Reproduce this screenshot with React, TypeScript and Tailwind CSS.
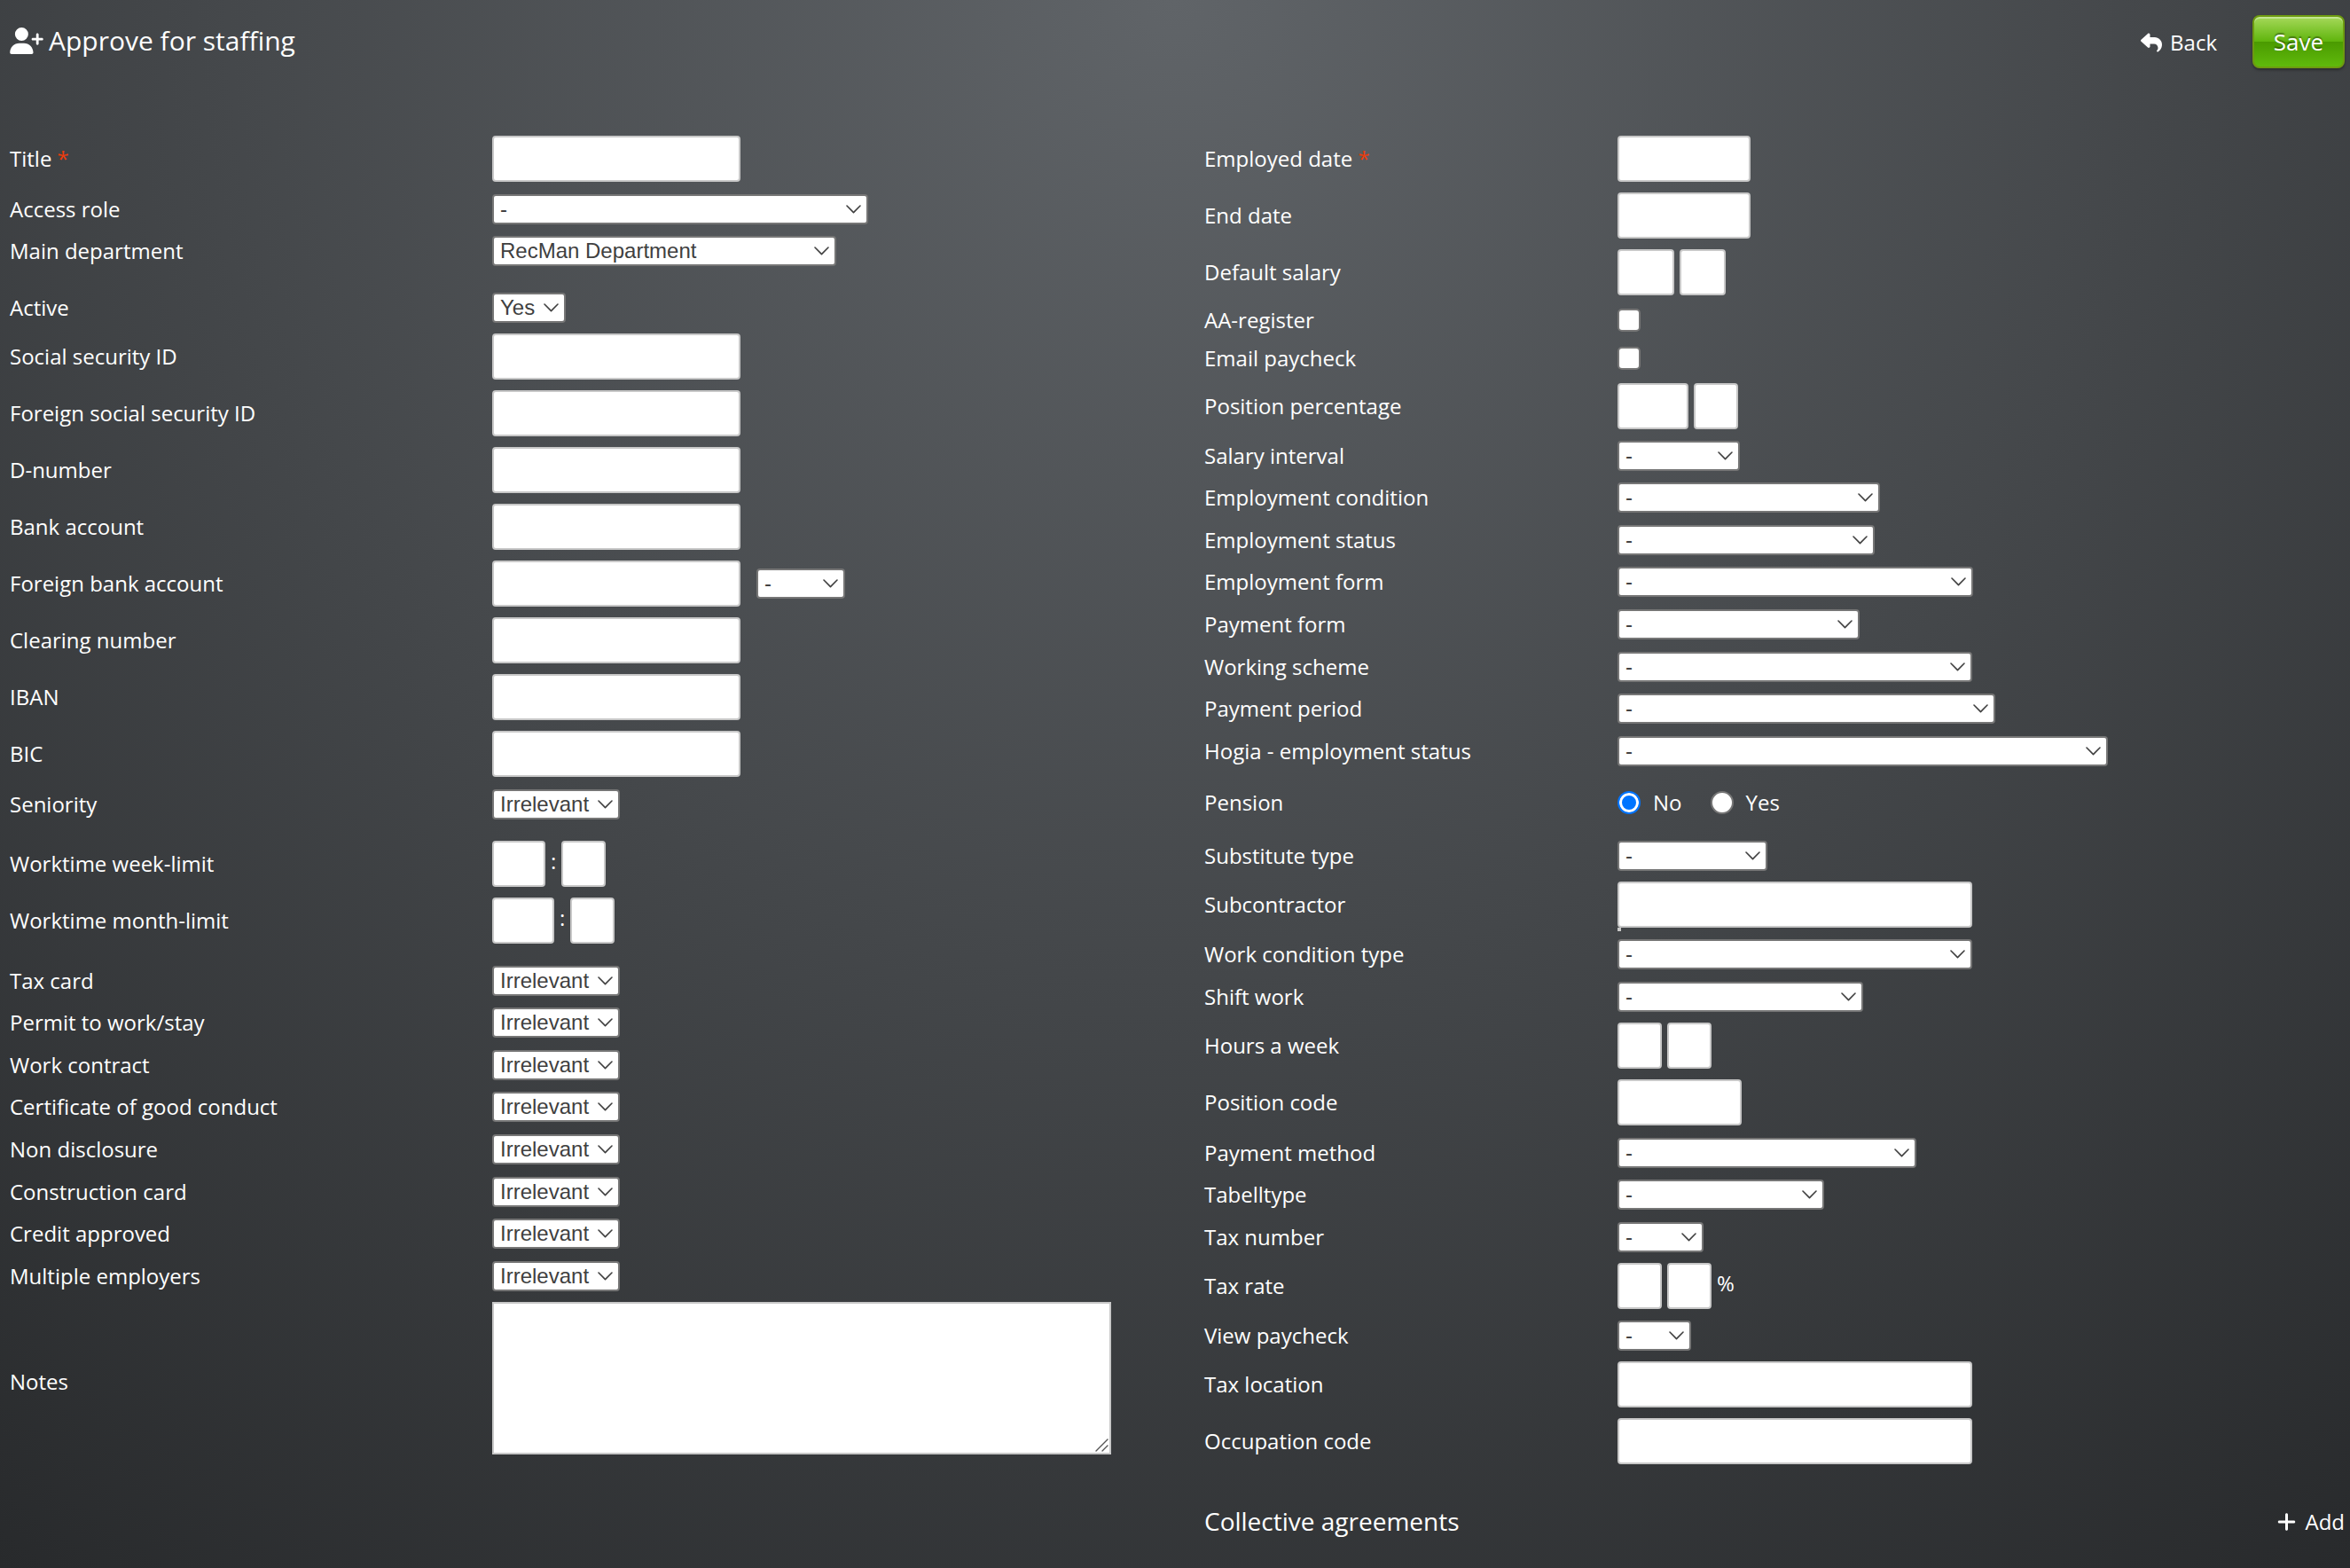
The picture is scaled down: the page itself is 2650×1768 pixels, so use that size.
import React from "react";
// Icons
import { FaPlus, FaReply, FaUserPlus } from "react-icons/fa6";

type Control =
  | { type: "input"; width: string; before?: string }
  | { type: "select"; width: string; value?: string; indent?: string }
  | { type: "checkbox" }
  | { type: "radio" }
  | { type: "textarea" }
  | { type: "text"; value: string };

type Field = {
  label: string;
  gap?: string;
  required?: boolean;
  suggestions?: boolean;
  controls: Control[];
};

const input = (width: string): Control => ({ type: "input", width });
const select = (width: string, value = "-"): Control => ({
  type: "select",
  width,
  value,
});
const irrelevant = select("w-[144px]", "Irrelevant");

const leftFields: Field[] = [
  { label: "Title", gap: "mt-0", required: true, controls: [input("w-[280px]")] },
  { label: "Access role", gap: "mt-[14px]", controls: [select("w-[424px]")] },
  {
    label: "Main department",
    gap: "mt-[13px]",
    controls: [select("w-[388px]", "RecMan Department")],
  },
  { label: "Active", gap: "mt-[30px]", controls: [select("w-[83px]", "Yes")] },
  { label: "Social security ID", controls: [input("w-[280px]")] },
  { label: "Foreign social security ID", controls: [input("w-[280px]")] },
  { label: "D-number", controls: [input("w-[280px]")] },
  { label: "Bank account", controls: [input("w-[280px]")] },
  {
    label: "Foreign bank account",
    controls: [
      input("w-[280px]"),
      { type: "select", width: "w-[100px]", value: "-", indent: "ml-3" },
    ],
  },
  { label: "Clearing number", controls: [input("w-[280px]")] },
  { label: "IBAN", controls: [input("w-[280px]")] },
  { label: "BIC", controls: [input("w-[280px]")] },
  { label: "Seniority", gap: "mt-[14px]", controls: [irrelevant] },
  {
    label: "Worktime week-limit",
    gap: "mt-6",
    controls: [input("w-[60px]"), { type: "text", value: ":" }, input("w-[50px]")],
  },
  {
    label: "Worktime month-limit",
    controls: [input("w-[70px]"), { type: "text", value: ":" }, input("w-[50px]")],
  },
  { label: "Tax card", gap: "mt-[25px]", controls: [irrelevant] },
  { label: "Permit to work/stay", gap: "mt-[13px]", controls: [irrelevant] },
  { label: "Work contract", gap: "mt-[14px]", controls: [irrelevant] },
  { label: "Certificate of good conduct", gap: "mt-[13px]", controls: [irrelevant] },
  { label: "Non disclosure", gap: "mt-[14px]", controls: [irrelevant] },
  { label: "Construction card", gap: "mt-[14px]", controls: [irrelevant] },
  { label: "Credit approved", gap: "mt-[13px]", controls: [irrelevant] },
  { label: "Multiple employers", gap: "mt-[14px]", controls: [irrelevant] },
  { label: "Notes", controls: [{ type: "textarea" }] },
];

const rightFields: Field[] = [
  { label: "Employed date", gap: "mt-0", required: true, controls: [input("w-[150px]")] },
  { label: "End date", controls: [input("w-[150px]")] },
  { label: "Default salary", controls: [input("w-[64px]"), input("w-[52px]")] },
  { label: "AA-register", controls: [{ type: "checkbox" }] },
  { label: "Email paycheck", gap: "mt-[11px]", controls: [{ type: "checkbox" }] },
  { label: "Position percentage", controls: [input("w-[80px]"), input("w-[50px]")] },
  { label: "Salary interval", gap: "mt-[13px]", controls: [select("w-[138px]")] },
  { label: "Employment condition", gap: "mt-[13px]", controls: [select("w-[296px]")] },
  { label: "Employment status", gap: "mt-[14px]", controls: [select("w-[290px]")] },
  { label: "Employment form", gap: "mt-[13px]", controls: [select("w-[401px]")] },
  { label: "Payment form", gap: "mt-[14px]", controls: [select("w-[273px]")] },
  { label: "Working scheme", gap: "mt-[14px]", controls: [select("w-[400px]")] },
  { label: "Payment period", gap: "mt-[13px]", controls: [select("w-[426px]")] },
  {
    label: "Hogia - employment status",
    gap: "mt-[14px]",
    controls: [select("w-[553px]")],
  },
  { label: "Pension", gap: "mt-[25px]", controls: [{ type: "radio" }] },
  { label: "Substitute type", gap: "mt-[27px]", controls: [select("w-[169px]")] },
  { label: "Subcontractor", suggestions: true, controls: [input("w-[400px]")] },
  { label: "Work condition type", gap: "mt-[13px]", controls: [select("w-[400px]")] },
  { label: "Shift work", gap: "mt-[14px]", controls: [select("w-[277px]")] },
  { label: "Hours a week", controls: [input("w-[50px]"), input("w-[50px]")] },
  { label: "Position code", controls: [input("w-[140px]")] },
  { label: "Payment method", gap: "mt-[14px]", controls: [select("w-[337px]")] },
  { label: "Tabelltype", gap: "mt-[13px]", controls: [select("w-[233px]")] },
  { label: "Tax number", gap: "mt-[14px]", controls: [select("w-[97px]")] },
  {
    label: "Tax rate",
    controls: [input("w-[50px]"), input("w-[50px]"), { type: "text", value: "%" }],
  },
  { label: "View paycheck", gap: "mt-[13px]", controls: [select("w-[83px]")] },
  { label: "Tax location", controls: [input("w-[400px]")] },
  { label: "Occupation code", controls: [input("w-[400px]")] },
];

function Select({ id, name, control }: { id: string; name: string; control: any }) {
  return (
    <div className={`relative ${control.width} ${control.indent ?? ""}`}>
      <select
        id={id}
        aria-label={name}
        className="block w-full h-[34px] pl-[7px] pr-7 appearance-none rounded-[4px] border-2 border-[#767676] bg-white text-[#404040] text-2xl leading-[30px] font-['Liberation_Sans',Arial,sans-serif]"
      >
        <option>{control.value}</option>
      </select>
      <svg
        className="absolute right-2 top-3 w-[17px] h-[10px] pointer-events-none"
        viewBox="0 0 17 10"
        fill="none"
        stroke="#404040"
        strokeWidth="1.6"
        strokeLinecap="round"
        strokeLinejoin="round"
      >
        <path d="M1 1 L8.5 8.6 L16 1" />
      </svg>
    </div>
  );
}

function PensionRadios({ id }: { id: string }) {
  const [pension, setPension] = React.useState("No");

  return (
    <div className="flex items-center h-8 gap-8">
      {["No", "Yes"].map((option) => (
        <label key={option} className="flex items-center gap-[14px]">
          <input
            id={option === "No" ? id : undefined}
            type="radio"
            name="pension"
            checked={pension === option}
            onChange={() => setPension(option)}
            className="appearance-none size-[26px] rounded-full border-2 border-[#767676] bg-white checked:border-[#0075ff] checked:bg-[#0075ff] checked:shadow-[inset_0_0_0_3px_#fff]"
          />
          {option}
        </label>
      ))}
    </div>
  );
}

function Notes({ id }: { id: string }) {
  return (
    <div className="relative">
      <textarea
        id={id}
        className="block w-[698px] h-[172px] p-2 border-2 border-[#c8c8c8] bg-white text-[#404040]"
      />
      {/* Resize grip */}
      <svg
        className="absolute right-[2px] bottom-[2px] size-4 bg-white pointer-events-none"
        viewBox="0 0 16 16"
        stroke="#555"
        strokeWidth="1.4"
        strokeLinecap="round"
      >
        <path d="M1 14 L14 1 M8 14 L14 8" />
      </svg>
    </div>
  );
}

function FieldRow({ field, labelWidth }: { field: Field; labelWidth: string }) {
  const id = field.label.toLowerCase().replace(/[^a-z]+/g, "-");
  const isNotes = field.controls[0].type === "textarea";

  return (
    <div className={`flex items-center ${field.gap ?? "mt-3"}`}>
      <label
        htmlFor={`${id}-0`}
        className={`${labelWidth} shrink-0 ${isNotes ? "pt-2" : ""}`}
      >
        {field.label}
        {field.required && <span className="text-[#ee3c0c]"> *</span>}
      </label>

      {/* Controls */}
      <div className="relative flex items-center gap-[6px]">
        {field.controls.map((control, key) => {
          const controlId = `${id}-${key}`;
          switch (control.type) {
            case "input":
              return (
                <input
                  key={key}
                  id={controlId}
                  type="text"
                  aria-label={field.label}
                  className={`${control.width} h-[52px] px-2 rounded-[4px] border-2 border-[#c8c8c8] bg-white text-[#404040]`}
                />
              );
            case "select":
              return (
                <Select key={key} id={controlId} name={field.label} control={control} />
              );
            case "checkbox":
              return (
                <div key={key} className="flex items-center h-8">
                  <input
                    id={controlId}
                    type="checkbox"
                    className="appearance-none size-[26px] rounded-[5px] border-2 border-[#767676] bg-white checked:bg-[#0075ff]"
                  />
                </div>
              );
            case "radio":
              return <PensionRadios key={key} id={controlId} />;
            case "textarea":
              return <Notes key={key} id={controlId} />;
            default:
              return (
                <span key={key} className="pb-[6px]">
                  {control.value}
                </span>
              );
          }
        })}

        {/* Empty suggestion list */}
        {field.suggestions && (
          <ul className="absolute left-0 top-full size-1 bg-[#c8c8c8]"></ul>
        )}
      </div>
    </div>
  );
}

export default function App() {
  return (
    <div className="min-h-screen pt-[17px] pl-[11px] pr-[6px] text-white text-2xl leading-8 font-['Open_Sans',sans-serif] bg-[radial-gradient(circle_at_top,#606468,#282a2c)]">
      {/* Header */}
      <header className="flex justify-between items-center h-[60px]">
        <h1 className="flex items-center gap-[6px] pb-[2px] text-[30px] leading-10">
          <FaUserPlus className="w-[38px] h-[30px]" />
          Approve for staffing
        </h1>

        <div className="flex items-center gap-10">
          <a href="#" className="flex items-center gap-[9px] pt-px">
            <FaReply className="size-6" />
            Back
          </a>
          <button
            type="submit"
            className="w-[104px] h-[60px] rounded-lg border-2 border-[#6d9a10] text-[26px] [text-shadow:0_-2px_1px_rgba(0,0,0,0.35)] shadow-[inset_0_2px_0_rgba(255,255,255,0.35),0_2px_3px_rgba(0,0,0,0.35)] bg-[linear-gradient(#a6d95a,#5fb40c_50%,#4a9a00_50%,#60ba0c)]"
          >
            Save
          </button>
        </div>
      </header>

      {/* Form */}
      <form className="grid grid-cols-[1347fr_1286fr] mt-[76px]">
        <div>
          {leftFields.map((field) => (
            <FieldRow key={field.label} field={field} labelWidth="w-[544px]" />
          ))}
        </div>

        <div>
          {rightFields.map((field) => (
            <FieldRow key={field.label} field={field} labelWidth="w-[466px]" />
          ))}

          {/* Collective agreements */}
          <div className="flex justify-between items-center mt-11">
            <h2 className="text-[28px] leading-10">Collective agreements</h2>
            <button type="button" className="flex items-center gap-[10px] pt-px">
              <FaPlus className="w-[21px] h-6" />
              Add
            </button>
          </div>
        </div>
      </form>
    </div>
  );
}
